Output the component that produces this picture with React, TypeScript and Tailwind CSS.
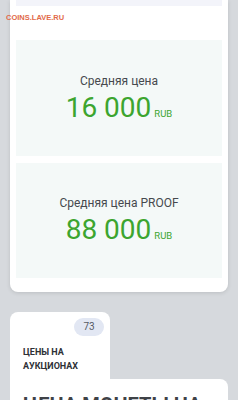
import React from 'react';

interface PriceBoxProps {
  label: string;
  value: string;
  className?: string;
}

const PriceBox: React.FC<PriceBoxProps> = ({ label, value, className }) => (
  <div className={`bg-[#f4f9f8] mx-[6px] flex flex-col items-center justify-center ${className ?? ''}`}>
    <div className="text-[12px] leading-[16px] text-[#46494e]">{label}</div>
    <div className="flex items-baseline mt-[3px] text-[#3ca52f]">
      <span className="text-[28px] leading-[32px]">{value}</span>
      <span className="text-[9.5px] ml-[3px]">RUB</span>
    </div>
  </div>
);

const App: React.FC = () => {
  return (
    <div className="relative min-h-[400px] h-[400px] overflow-hidden bg-[#d6d9dd] font-['Roboto',sans-serif]">
      {/* watermark */}
      <div className="absolute left-[6px] top-[12px] z-10 text-[7.5px] font-bold text-[#e2694a] font-['Liberation_Sans',sans-serif]">
        COINS.LAVE.RU
      </div>

      <div className="mx-[10px] bg-white rounded-b-[8px] shadow-[0_1px_4px_rgba(0,0,0,0.12)] pb-[14px]">
        <div className="h-[6px] mx-[6px] bg-[#f3f4fa]"></div>
        <PriceBox label="Средняя цена" value="16 000" className="mt-[34px] h-[116px]" />
        <PriceBox label="Средняя цена PROOF" value="88 000" className="mt-[7px] h-[115px]" />
      </div>

      <div className="mt-[20px] mx-[10px]">
        <div className="w-[100px] h-[70px] bg-white rounded-t-[8px] px-[13px] pt-[6px]">
          <div className="flex justify-end -mr-[7px]">
            <span className="h-[18px] w-[30px] rounded-full bg-[#e2e7f3] text-[10px] leading-[18px] text-center text-[#555a63]">
              73
            </span>
          </div>
          <div className="mt-[9px] text-[9px] leading-[14px] font-bold text-[#2e3136] uppercase">
            Цены на
            <br />
            аукционах
          </div>
        </div>
        <div className="-mt-[3px] bg-white rounded-tr-[8px] px-[13px] pt-[14px] h-[60px]">
          <div className="text-[20px] leading-[24px] font-bold text-[#3f4247] whitespace-nowrap">
            ЦЕНА МОНЕТЫ НА
          </div>
        </div>
      </div>
    </div>
  );
};

export default App;
